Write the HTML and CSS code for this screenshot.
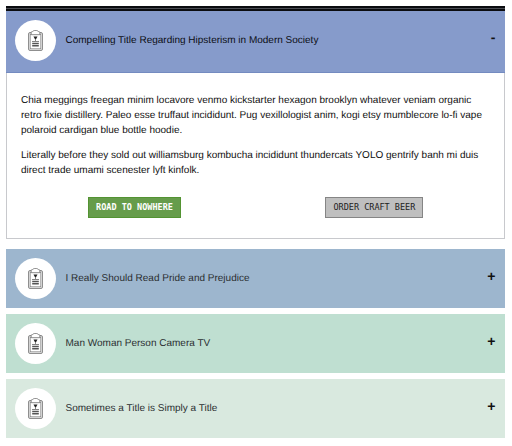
FILE: index.html
```html
<!DOCTYPE html>
<html lang="en">
<head>
<meta charset="utf-8">
<title>Accordion</title>
<link rel="stylesheet" href="styles.css">
</head>
<body>
<svg class="defs" width="0" height="0">
  <symbol id="clipboard" viewBox="0 0 15 21">
    <rect x=".5" y="2.5" width="14" height="18" rx="1.5" fill="#ddd" stroke="#666" stroke-width=".7"/>
    <rect x="2.2" y="4.2" width="10.6" height="14.6" fill="#fff" stroke="#777" stroke-width=".6"/>
    <path d="M3.2 4.7V2.4Q3.2 1.6 4.2 1.6H4.8Q5.2.5 6.2.5H8.8Q9.8.5 10.2 1.6H10.8Q11.8 1.6 11.8 2.4V4.7Z" fill="#fff" stroke="#666" stroke-width=".7"/>
    <path d="M5.5 6.5H9.5L8 9.2H7Z" fill="#222"/>
    <path d="M7.5 9V11M4 11.5H11" stroke="#666" stroke-width=".8"/>
    <path d="M4.2 13.5H10.8M4.2 15.7H10.8" stroke="#555" stroke-width="1.4"/>
  </symbol>
</svg>
<main class="accordion">
  <section class="item item-open">
    <header class="bar bar-open">
      <span class="badge"><svg class="icon"><use href="#clipboard"/></svg></span>
      <h2 class="title">Compelling Title Regarding Hipsterism in Modern Society</h2>
      <span class="toggle">-</span>
    </header>
    <div class="panel">
      <p class="copy">Chia meggings freegan minim locavore venmo kickstarter hexagon brooklyn whatever veniam organic<br>retro fixie distillery. Paleo esse truffaut incididunt. Pug vexillologist anim, kogi etsy mumblecore lo-fi vape<br>polaroid cardigan blue bottle hoodie.</p>
      <p class="copy">Literally before they sold out williamsburg kombucha incididunt thundercats YOLO gentrify banh mi duis<br>direct trade umami scenester lyft kinfolk.</p>
      <div class="actions">
        <button class="button primary">ROAD TO NOWHERE</button>
        <button class="button secondary">ORDER CRAFT BEER</button>
      </div>
    </div>
  </section>
  <header class="bar blue">
    <span class="badge"><svg class="icon"><use href="#clipboard"/></svg></span>
    <h2 class="title">I Really Should Read Pride and Prejudice</h2>
    <span class="toggle">+</span>
  </header>
  <header class="bar green">
    <span class="badge"><svg class="icon"><use href="#clipboard"/></svg></span>
    <h2 class="title">Man Woman Person Camera TV</h2>
    <span class="toggle">+</span>
  </header>
  <header class="bar pale">
    <span class="badge"><svg class="icon"><use href="#clipboard"/></svg></span>
    <h2 class="title">Sometimes a Title is Simply a Title</h2>
    <span class="toggle">+</span>
  </header>
</main>
</body>
</html>
```
FILE: styles.css
```css
* { box-sizing: border-box; }
body { margin: 0; background: #fff; font-family: "Liberation Sans", Arial, sans-serif; color: #111; text-rendering: geometricPrecision; }
.defs { display: block; }
.accordion { width: 499.4px; margin: 6px 0 0 6px; display: flex; flex-direction: column; gap: 5.5px; }
.item-open { height: 232.7px; margin-bottom: 4.8px; display: flex; flex-direction: column; }
.bar { height: 59.5px; padding: 0 10px 0 9px; display: flex; align-items: center; color: #2b2f31; }
.bar-open { height: 67px; padding-bottom: 2px; background: linear-gradient(#0b0c10 0 2px, #4a4c52 2px 3px, #0b0c10 3px 5px, #869bcb 5px); padding-top: 5px; border-bottom: 1px solid #748bc0; color: #0c0e14; }
.badge { width: 41px; height: 41px; flex: none; border-radius: 50%; background: #fff; display: flex; align-items: center; justify-content: center; }
.icon { width: 15px; height: 21px; display: block; }
.title { margin: 0 0 0 9.5px; flex: 1; font-size: 10px; font-weight: 400; line-height: 15px; white-space: nowrap; }
.toggle { color: #111; font-size: 14px; font-weight: 700; line-height: 16px; margin-bottom: 6px; }
.bar-open .toggle { margin-bottom: 8px; }
.panel { flex: 1; border: 1px solid #c8c9cd; border-top: 0; padding: 20px 14px 0; }
.copy { margin: 0 0 10px; font-size: 10px; line-height: 15px; white-space: nowrap; }
.actions { display: flex; justify-content: space-between; padding: 9px 67px 0; margin-top: 10px; }
.button { height: 21px; padding: 0; font-family: "DejaVu Sans Mono", monospace; font-size: 8.5px; line-height: 19px; }
.primary { width: 93px; border: 1px solid #539332; background: #669c4b; color: #fff; font-weight: 700; }
.secondary { width: 98px; border: 1px solid #858585; background: #bfbfbf; color: #222; }
.blue { background: #9db6ce; }
.green { background: #bfdfd1; }
.pale { background: #d9e9df; }
```
